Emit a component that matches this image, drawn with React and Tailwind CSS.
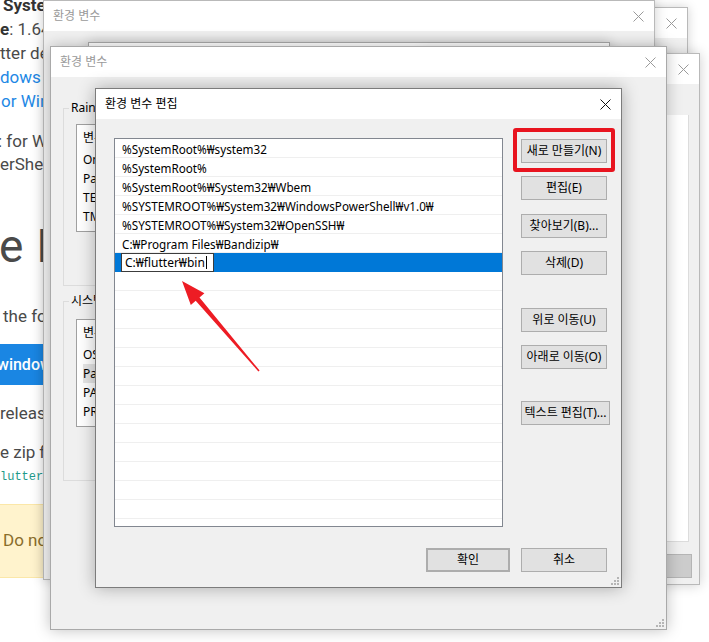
const UI = "font-['Noto_Sans','Noto_Sans_CJK_KR',sans-serif] text-[12px]";

function CloseX({ dark }) {
  return (
    <svg width="11" height="11" viewBox="0 0 11 11" className="shrink-0">
      <path d="M0.5 0.5L10.5 10.5M10.5 0.5L0.5 10.5" stroke={dark ? '#111' : '#9a9a9a'} strokeWidth="1" />
    </svg>
  );
}

function Grip() {
  return (
    <svg width="8" height="8" viewBox="0 0 8 8">
      <rect x="6" y="0" width="2" height="2" fill="#b5b5b5" />
      <rect x="3" y="3" width="2" height="2" fill="#b5b5b5" />
      <rect x="6" y="3" width="2" height="2" fill="#b5b5b5" />
      <rect x="0" y="6" width="2" height="2" fill="#b5b5b5" />
      <rect x="3" y="6" width="2" height="2" fill="#b5b5b5" />
      <rect x="6" y="6" width="2" height="2" fill="#b5b5b5" />
    </svg>
  );
}

function Win({ className, title, active, children }) {
  return (
    <div className={`absolute flex flex-col bg-[#f0f0f0] ${UI} ${className}`}>
      <div className="h-[30px] shrink-0 bg-white flex items-center justify-between pl-[9px] pr-[10px]">
        <span className={active ? 'text-black leading-none' : 'text-[#9a9a9a] leading-none'}>{title}</span>
        <CloseX dark={active} />
      </div>
      <div className="flex-1 relative">{children}</div>
    </div>
  );
}

function Btn({ children, className = '' }) {
  return (
    <div className={`h-[24px] flex items-center justify-center bg-[#e1e1e1] border border-[#adadad] text-black leading-none ${className}`}>
      {children}
    </div>
  );
}

function MiniList({ rows, hi }) {
  return (
    <div className="w-[500px] h-[108px] bg-white border border-[#a0a0a0] pl-[6px] text-black whitespace-nowrap">
      <div className="h-[25px] leading-[25px]">변수</div>
      {rows.map((r, i) => (
        <div key={r} className={`h-[19px] leading-[19px] ${i === hi ? 'bg-[#e5e5e5]' : ''}`}>{r}</div>
      ))}
    </div>
  );
}

const PATHS = [
  '%SystemRoot%₩system32',
  '%SystemRoot%',
  '%SystemRoot%₩System32₩Wbem',
  '%SYSTEMROOT%₩System32₩WindowsPowerShell₩v1.0₩',
  '%SYSTEMROOT%₩System32₩OpenSSH₩',
  'C:₩Program Files₩Bandizip₩',
];

function PageBehind() {
  return (
    <div className="flex flex-col font-['Roboto',sans-serif] text-[17px] text-[#4a4a4a] whitespace-nowrap">
      <div className="h-[24px] leading-[24px] -mt-[7px] pl-[3px] font-bold text-[#333]">System Requirements</div>
      <div className="h-[24px] leading-[24px]"><b className="text-[#333]">e</b>: 1.64 GB</div>
      <div className="h-[24px] leading-[24px]">tter depends on</div>
      <div className="h-[24px] leading-[24px] text-[#1e88e5]">dows PowerShell</div>
      <div className="h-[24px] leading-[24px] pl-[1px] text-[#1e88e5]">or Windows</div>
      <div className="h-[24px] leading-[24px] mt-[16px] -ml-[2px]">: for Windows</div>
      <div className="h-[22px] leading-[22px]">erShell</div>
      <div className="h-[60px] leading-[60px] mt-[41px] text-[46px] -ml-[1px] flex">
        <span>e</span>
        <span className="ml-[13px]">Flutter</span>
      </div>
      <div className="h-[24px] leading-[24px] mt-[28px] pl-[3px]">the following</div>
      <div className="h-[41px] mt-[16px] w-[120px] bg-[#1a86e3] text-white font-medium flex items-center -ml-[3px] text-[16px]">windows</div>
      <div className="h-[24px] leading-[24px] mt-[16px]">release</div>
      <div className="h-[24px] leading-[24px] mt-[15px]">e zip file</div>
      <div className="h-[24px] leading-[24px] mt-[1px] font-['Liberation_Mono',monospace] text-[12px] text-[#1f9a8a]">lutter</div>
      <div className="h-[74px] mt-[15px] w-[200px] bg-[#fff3cd] border-y border-[#fbe7a8] flex items-center pl-[3px] text-[#8a6d2b]">Do not install</div>
    </div>
  );
}

export default function App() {
  return (
    <div className="relative w-[709px] h-[642px] overflow-hidden bg-white">
      <PageBehind />

      {/* window stack, back to front */}
      <Win className="left-[400px] top-[7px] w-[288px] h-[500px] border border-[#b9b9b9] shadow-[0_0_10px_rgba(0,0,0,0.18)]" title="환경 변수" />

      <Win className="left-[43px] top-0 w-[612px] h-[580px] border border-[#b9b9b9] shadow-[0_0_12px_rgba(0,0,0,0.2)]" title="환경 변수" />

      <div className="absolute left-[88px] top-[42px] w-[522px] h-[400px] bg-white border border-[#a9a9a9] shadow-[0_0_12px_rgba(0,0,0,0.2)]" />

      <Win className="left-[420px] top-[53px] w-[280px] h-[532px] border border-[#b9b9b9] shadow-[0_0_12px_rgba(0,0,0,0.2)]" title="환경 변수">
        <div className="flex flex-col items-end pt-[31px]">
          <div className="w-[200px] h-[427px] bg-white border-r border-b border-[#dcdcdc] mr-[10px]" />
          <div className="w-[86px] h-[24px] bg-[#cccccc] border border-[#b5b5b5] mt-[12px] mr-[7px]" />
        </div>
      </Win>

      <Win className="left-[50px] top-[46px] w-[617px] h-[584px] border border-[#a9a9a9] shadow-[0_0_14px_rgba(0,0,0,0.25)]" title="환경 변수">
        <div className="flex flex-col pl-[12px] pt-[31px] text-black">
          <div className="relative w-[540px] h-[178px] border border-[#dcdcdc] pl-[12px] pt-[15px]">
            <span className="absolute -top-[9px] left-[5px] px-[2px] bg-[#f0f0f0] leading-[16px]">Rainbow에 대한 사용자 변수(U)</span>
            <MiniList rows={['OneDrive', 'Path', 'TEMP', 'TMP']} hi={-1} />
          </div>
          <div className="relative w-[540px] h-[180px] mt-[15px] border border-[#dcdcdc] pl-[12px] pt-[17px]">
            <span className="absolute -top-[9px] left-[5px] px-[2px] bg-[#f0f0f0] leading-[16px]">시스템 변수(S)</span>
            <MiniList rows={['OS', 'Path', 'PATHEXT', 'PROCESSOR_ARCHITECTURE']} hi={1} />
          </div>
        </div>
        <div className="absolute right-[2px] bottom-[2px]"><Grip /></div>
      </Win>

      <Win active className="left-[95px] top-[88px] w-[527px] h-[500px] border border-[#7c7c7c] shadow-[0_0_16px_rgba(0,0,0,0.3)]" title="환경 변수 편집">
        <div className="flex flex-col pl-[18px] pt-[19px]">
          <div className="flex">
            <div className="w-[389px] h-[389px] bg-white border border-[#828790] overflow-hidden">
              {Array.from({ length: 21 }).map((_, i) => {
                if (i === 6) {
                  return (
                    <div key={i} className="h-[19px] bg-[#0078d7] pl-[6px] flex items-center">
                      <div className="w-[93px] h-[19px] bg-white border border-[#3c3c3c] pl-[3px] flex items-center leading-none text-black">
                        C:₩flutter₩bin<span className="inline-block w-[1px] h-[13px] bg-black ml-[1px]" />
                      </div>
                    </div>
                  );
                }
                return (
                  <div key={i} className="h-[19px] pt-[1px] leading-[18px] border-b border-[#efefef] pl-[7px] text-black text-[11.7px] whitespace-nowrap">
                    {PATHS[i] || ''}
                  </div>
                );
              })}
            </div>
            <div className="flex flex-col ml-[18px] pt-[1px]">
              <div className="relative">
                <Btn className="w-[86px]">새로 만들기(N)</Btn>
                <div className="absolute -left-[8px] -top-[11px] w-[102px] h-[44px] border-[4px] border-[#e8141f] rounded-[3px]" />
              </div>
              <Btn className="w-[86px] mt-[13px]">편집(E)</Btn>
              <Btn className="w-[86px] mt-[14px]">찾아보기(B)...</Btn>
              <Btn className="w-[86px] mt-[13px]">삭제(D)</Btn>
              <Btn className="w-[86px] mt-[33px]">위로 이동(U)</Btn>
              <Btn className="w-[86px] mt-[13px]">아래로 이동(O)</Btn>
              <Btn className="w-[89px] mt-[32px]">텍스트 편집(T)...</Btn>
            </div>
          </div>
          <div className="flex mt-[21px] pl-[312px]">
            <Btn className="w-[84px] border-2 border-[#0078d7]">확인</Btn>
            <Btn className="w-[86px] ml-[11px]">취소</Btn>
          </div>
        </div>
        <div className="absolute right-[2px] bottom-[2px]"><Grip /></div>
      </Win>

      <svg className="absolute left-[170px] top-[270px]" width="100" height="110" viewBox="170 270 100 110">
        <polygon
          points="182,281 204.4,293.3 199.5,297.6 259.6,370.6 258.4,371.4 195.7,300.8 190.8,305.1"
          fill="#ed1c24"
        />
      </svg>
    </div>
  );
}
